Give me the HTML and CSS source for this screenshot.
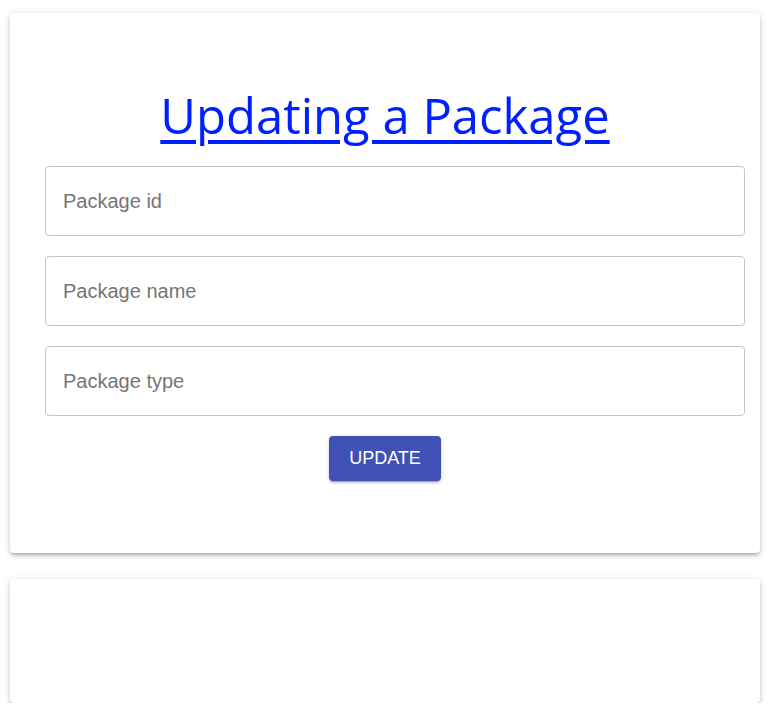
FILE: index.html
```html
<!DOCTYPE html>
<html>
<head>
<meta charset="utf-8">
<link rel="stylesheet" href="styles.css">
</head>
<body>
<div class="page">
  <div class="card main">
    <h1 class="title"><a href="#">Updating a Package</a></h1>
    <form class="form">
      <input class="field" type="text" placeholder="Package id">
      <input class="field" type="text" placeholder="Package name">
      <input class="field" type="text" placeholder="Package type">
      <div class="actions"><button type="button" class="btn">UPDATE</button></div>
    </form>
  </div>
  <div class="card empty"></div>
</div>
</body>
</html>
```

FILE: styles.css
```css
html, body {
  margin: 0;
  padding: 0;
  background: #fff;
}
.page {
  padding: 13px 12px 0 10px;
  display: flex;
  flex-direction: column;
  gap: 26px;
}
.card {
  background: #fff;
  border-radius: 4px;
  box-shadow: 0px 3px 3px -2px rgba(0,0,0,0.2), 0px 3px 4px 0px rgba(0,0,0,0.14), 0px 1px 8px 0px rgba(0,0,0,0.12);
}
.main {
  height: 540px;
  box-sizing: border-box;
  padding-top: 72px;
}
.empty {
  height: 124px;
}
.title {
  margin: 0;
  text-align: center;
  font-family: "Open Sans", "Noto Sans", sans-serif;
  font-weight: 400;
  font-size: 49px;
  line-height: 60px;
}
.title a {
  color: #0020ff;
  text-decoration: underline;
  text-decoration-thickness: 4px;
  text-underline-offset: 6px;
}
.form {
  margin-top: 21px;
  padding: 0 15px 0 35px;
  display: flex;
  flex-direction: column;
  gap: 20px;
}
.field {
  box-sizing: border-box;
  height: 70px;
  width: 100%;
  border: 1px solid #c4c4c4;
  border-radius: 4px;
  padding: 0 17px;
  font-family: "Liberation Sans", Arial, sans-serif;
  font-size: 20px;
  color: #333;
  outline: none;
}
.field::placeholder {
  color: #757575;
  opacity: 1;
}
.actions {
  display: flex;
  justify-content: center;
  margin-left: -20px;
}
.btn {
  width: 112px;
  height: 45px;
  background: #3f51b5;
  color: #fff;
  border: none;
  border-radius: 4px;
  font-family: "Liberation Sans", Arial, sans-serif;
  font-size: 18px;
  box-shadow: 0px 3px 1px -2px rgba(0,0,0,0.2), 0px 2px 2px 0px rgba(0,0,0,0.14), 0px 1px 5px 0px rgba(0,0,0,0.12);
  cursor: pointer;
}
```
